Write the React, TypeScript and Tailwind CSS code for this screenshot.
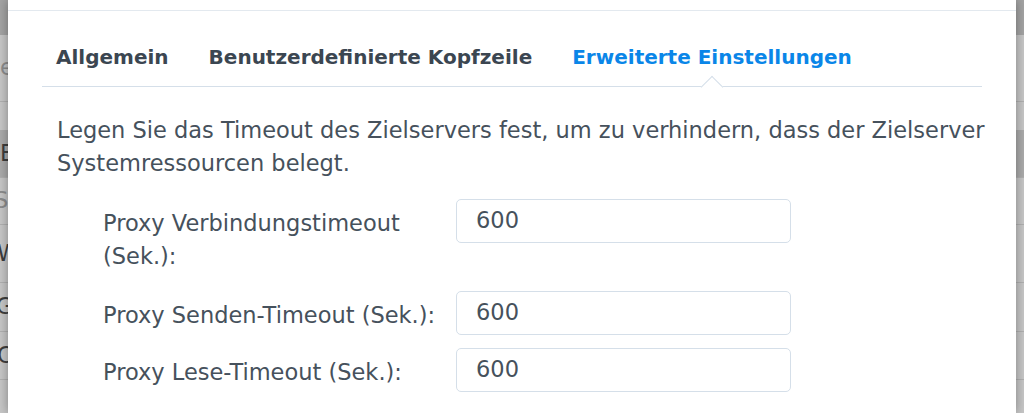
import React from "react";

const font = { fontFamily: '"DejaVu Sans", Verdana, sans-serif' };

function Tab({ label, active }: { label: string; active?: boolean }) {
  return (
    <div className="relative flex h-full items-center pt-[17px] text-[20px]">
      <span className={active ? "font-bold text-[#0a86e8]" : "font-bold text-[#3b4651]"}>{label}</span>
      {active && (
        <div className="absolute bottom-[-9px] left-1/2 h-[16px] w-[16px] -translate-x-1/2 rotate-45 border-l border-t border-[#d5dfe9] bg-white" />
      )}
    </div>
  );
}

function Row({ label, className }: { label: React.ReactNode; className?: string }) {
  return (
    <div className={"flex items-start " + (className ?? "")}>
      <div className="w-[353px] pt-[8px] leading-[33px]">{label}</div>
      <div className="flex h-[44px] w-[335px] items-center rounded-[5px] border border-[#d5dfe9] pl-[19px]">600</div>
    </div>
  );
}

export default function App() {
  return (
    <div className="relative h-[413px] w-[1024px] overflow-hidden bg-[#c6c6c6] text-[22.5px] text-[#46515c]" style={font}>
      {/* hintergrund liste */}
      <div className="h-[35px] bg-[#a3a3a3]" />
      <div className="flex h-[67px] items-center border-b border-[#b0b0b0] text-[#8c8c8c]">ev</div>
      <div className="mt-[28px] flex h-[47px] items-center bg-[#aaaaaa] text-[#3d3d3d]">E</div>
      <div className="ml-[-6px] flex h-[48px] items-center border-y border-[#b0b0b0] text-[#8c8c8c]">Se</div>
      <div className="ml-[-3px] flex h-[58px] items-center border-b border-[#b0b0b0] text-[#3d3d3d]">W</div>
      <div className="ml-[-4px] flex h-[49px] items-center border-b border-[#b0b0b0] text-[#3d3d3d]">Gi</div>
      <div className="ml-[-3px] flex h-[48px] items-center border-b border-[#b0b0b0] text-[#3d3d3d]">Ca</div>

      {/* dialog */}
      <div className="absolute left-[8px] right-[8px] top-0 bottom-0 bg-white shadow-[0_0_10px_rgba(0,0,0,0.35)]">
        <div className="h-[11px] border-b border-[#e3e9ef]" />
        <div className="mx-[34px]">
          <div className="flex h-[76px] gap-[40px] border-b border-[#d5dfe9] pl-[14px]">
            <Tab label="Allgemein" />
            <Tab label="Benutzerdefinierte Kopfzeile" />
            <Tab label="Erweiterte Einstellungen" active />
          </div>
          <p className="mt-[27px] whitespace-nowrap pl-[15px] leading-[33px]">
            Legen Sie das Timeout des Zielservers fest, um zu verhindern, dass der Zielserver
            <br />
            Systemressourcen belegt.
          </p>
          <div className="mt-[19px] pl-[61px]">
            <Row label={<>Proxy Verbindungstimeout<br />(Sek.):</>} />
            <Row className="mt-[18px]" label="Proxy Senden-Timeout (Sek.):" />
            <Row className="mt-[13px]" label="Proxy Lese-Timeout (Sek.):" />
          </div>
        </div>
      </div>
    </div>
  );
}
